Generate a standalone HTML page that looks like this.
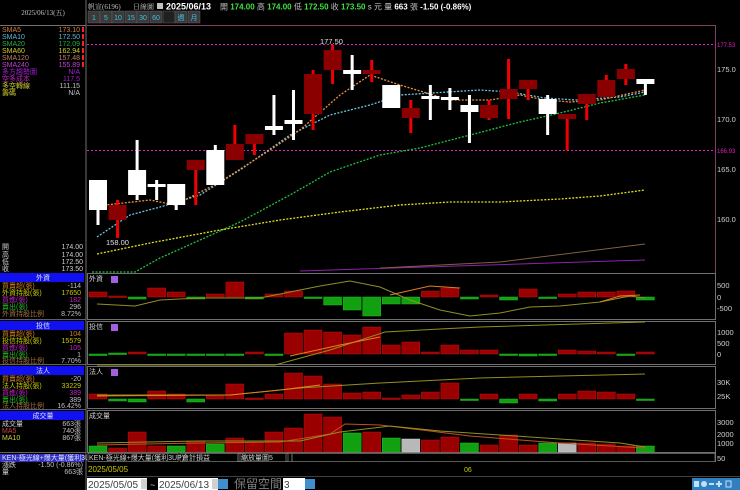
<!DOCTYPE html>
<html><head><meta charset="utf-8">
<style>
html,body{margin:0;padding:0;background:#000;width:740px;height:490px;overflow:hidden}
svg{display:block}
text{font-family:"Liberation Sans","Noto Sans CJK TC",sans-serif}
.s{font-family:"Liberation Serif","Noto Serif CJK SC",serif;font-size:7px}
</style></head><body>
<svg id="c" width="740" height="490" xmlns="http://www.w3.org/2000/svg">
<rect width="740" height="490" fill="#000"/>
<!-- left panel frame -->
<line x1="86" y1="0" x2="86" y2="490" stroke="#707070" stroke-width="1"/>
<line x1="0" y1="25.5" x2="86" y2="25.5" stroke="#707070"/>
<text x="43" y="15" class="s" fill="#c0c0c0" text-anchor="middle">2025/06/13(五)</text>
<g class="s">
<text x="2" y="32" fill="#d08040">SMA5</text><text x="80" y="32" fill="#d08040" text-anchor="end">173.10</text>
<text x="2" y="39" fill="#60b8d8">SMA10</text><text x="80" y="39" fill="#60b8d8" text-anchor="end">172.50</text>
<text x="2" y="46" fill="#20b040">SMA20</text><text x="80" y="46" fill="#20b040" text-anchor="end">172.09</text>
<text x="2" y="53" fill="#d0d030">SMA60</text><text x="80" y="53" fill="#d0d030" text-anchor="end">162.94</text>
<text x="2" y="60" fill="#c08060">SMA120</text><text x="80" y="60" fill="#c08060" text-anchor="end">157.48</text>
<text x="2" y="67" fill="#c040d0">SMA240</text><text x="80" y="67" fill="#c040d0" text-anchor="end">155.89</text>
<text x="2" y="74" fill="#a020d0">多方趨勢圖</text><text x="80" y="74" fill="#a020d0" text-anchor="end">N/A</text>
<text x="2" y="81" fill="#c020c0">空多成本</text><text x="80" y="81" fill="#a020d0" text-anchor="end">117.5</text>
<text x="2" y="88" fill="#d0d030">多空轉線</text><text x="80" y="88" fill="#c0c0c0" text-anchor="end">111.15</text>
<text x="2" y="95" fill="#d0d030">籌碼</text><text x="80" y="95" fill="#c0c0c0" text-anchor="end">N/A</text>
</g>
<g fill="#ff2020"><rect x="82" y="27" width="2" height="5"/><rect x="82" y="34" width="2" height="5"/><rect x="82" y="41" width="2" height="5"/><rect x="82" y="48" width="2" height="5"/><rect x="82" y="55" width="2" height="5"/><rect x="82" y="62" width="2" height="5"/></g>
<!-- OHLC -->
<g class="s" fill="#d0d0d0">
<text x="2" y="249">開</text><text x="83" y="249" text-anchor="end">174.00</text>
<text x="2" y="257">高</text><text x="83" y="257" text-anchor="end">174.00</text>
<text x="2" y="264">低</text><text x="83" y="264" text-anchor="end">172.50</text>
<text x="2" y="271">收</text><text x="83" y="271" text-anchor="end">173.50</text>
</g>
<!-- section headers -->
<g fill="#1010f0"><rect x="0" y="273" width="84" height="9"/><rect x="0" y="321" width="84" height="9"/><rect x="0" y="366" width="84" height="9"/><rect x="0" y="411" width="84" height="9"/><rect x="0" y="454" width="84" height="8" fill="#3030c0"/></g>
<g class="s" text-anchor="middle" fill="#e0e0e0"><text x="43" y="280">外資</text><text x="43" y="328">投信</text><text x="43" y="373">法人</text><text x="43" y="418">成交量</text></g>
<line x1="0" y1="319.5" x2="86" y2="319.5" stroke="#606060"/><line x1="0" y1="364.5" x2="86" y2="364.5" stroke="#606060"/><line x1="0" y1="409.5" x2="86" y2="409.5" stroke="#606060"/><line x1="0" y1="452.5" x2="86" y2="452.5" stroke="#606060"/>
<g class="s">
<text x="2" y="288" fill="#d08020">買賣超(張)</text><text x="81" y="288" fill="#c0c0c0" text-anchor="end">-114</text>
<text x="2" y="295" fill="#c8c800">外資持股(張)</text><text x="81" y="295" fill="#c8c800" text-anchor="end">17650</text>
<text x="2" y="302" fill="#c020c0">買進(張)</text><text x="81" y="302" fill="#c020c0" text-anchor="end">182</text>
<text x="2" y="309" fill="#20c020">賣出(張)</text><text x="81" y="309" fill="#c0c0c0" text-anchor="end">296</text>
<text x="2" y="316" fill="#a07040">外資持股比例</text><text x="81" y="316" fill="#c0c0c0" text-anchor="end">8.72%</text>
<text x="2" y="336" fill="#d08020">買賣超(張)</text><text x="81" y="336" fill="#d08020" text-anchor="end">104</text>
<text x="2" y="343" fill="#c8c800">投信持股(張)</text><text x="81" y="343" fill="#c8c800" text-anchor="end">15579</text>
<text x="2" y="350" fill="#c020c0">買進(張)</text><text x="81" y="350" fill="#c020c0" text-anchor="end">105</text>
<text x="2" y="357" fill="#20c020">賣出(張)</text><text x="81" y="357" fill="#c0c0c0" text-anchor="end">1</text>
<text x="2" y="363" fill="#a07040">投信持股比例</text><text x="81" y="363" fill="#c0c0c0" text-anchor="end">7.70%</text>
<text x="2" y="381" fill="#d08020">買賣超(張)</text><text x="81" y="381" fill="#c0c0c0" text-anchor="end">-20</text>
<text x="2" y="388" fill="#c8c800">法人持股(張)</text><text x="81" y="388" fill="#c8c800" text-anchor="end">33229</text>
<text x="2" y="395" fill="#c020c0">買進(張)</text><text x="81" y="395" fill="#c020c0" text-anchor="end">389</text>
<text x="2" y="402" fill="#20c020">賣出(張)</text><text x="81" y="402" fill="#c0c0c0" text-anchor="end">389</text>
<text x="2" y="408" fill="#a07040">法人持股比例</text><text x="81" y="408" fill="#c0c0c0" text-anchor="end">16.42%</text>
<text x="2" y="426" fill="#d0d0d0">成交量</text><text x="81" y="426" fill="#c0c0c0" text-anchor="end">663張</text>
<text x="2" y="433" fill="#d04040">MA5</text><text x="81" y="433" fill="#c0c0c0" text-anchor="end">740張</text>
<text x="2" y="440" fill="#d0d030">MA10</text><text x="81" y="440" fill="#c0c0c0" text-anchor="end">867張</text>
<text x="2" y="460" fill="#e0e0ff">KEN-極光線+爆大量(獲利3UP)</text>
<text x="2" y="467" fill="#d0d0d0">漲跌</text><text x="83" y="467" fill="#c0c0c0" text-anchor="end">-1.50 (-0.86%)</text>
<text x="2" y="474" fill="#d0d0d0">量</text><text x="83" y="474" fill="#c0c0c0" text-anchor="end">663張</text>
</g>
<!-- top info bar -->
<text x="88" y="9" class="s" fill="#c0c0c0">帆宣(6196)</text>
<text x="133" y="9" class="s" fill="#c0c0c0">日線圖</text>
<rect x="157" y="3" width="6" height="6" fill="#c0c0c0"/>
<text x="166" y="9.5" font-size="9" font-weight="bold" fill="#fff">2025/06/13</text>
<text x="220" y="9.5" font-size="8" fill="#c0c0c0">開 <tspan fill="#40e040" font-weight="bold">174.00</tspan> 高 <tspan fill="#40e040" font-weight="bold">174.00</tspan> 低 <tspan fill="#40e040" font-weight="bold">172.50</tspan> 收 <tspan fill="#40e040" font-weight="bold">173.50</tspan> s 元 量 <tspan fill="#fff" font-weight="bold">663</tspan> 張 <tspan fill="#fff" font-weight="bold">-1.50 (-0.86%)</tspan></text>
<g fill="#3a3a3a" stroke="#606060" stroke-width="0.5">
<rect x="88" y="11" width="12" height="12"/><rect x="100" y="11" width="12" height="12"/><rect x="112" y="11" width="12" height="12"/><rect x="125" y="11" width="12" height="12"/><rect x="137" y="11" width="12" height="12"/><rect x="150" y="11" width="12" height="12"/><rect x="163" y="11" width="12" height="12" fill="#202020"/><rect x="175" y="11" width="12" height="12"/><rect x="188" y="11" width="12" height="12"/></g>
<g font-size="7" fill="#40c0e0" text-anchor="middle"><text x="94" y="20">1</text><text x="106" y="20">5</text><text x="118" y="20">10</text><text x="131" y="20">15</text><text x="143" y="20">30</text><text x="156" y="20">60</text><text x="181" y="20">週</text><text x="194" y="20">月</text></g>
<!-- main chart frame -->
<line x1="715.5" y1="25" x2="715.5" y2="273" stroke="#804060"/>
<line x1="87" y1="25.5" x2="716" y2="25.5" stroke="#804060"/>
<line x1="87" y1="44.5" x2="716" y2="44.5" stroke="#e020c0" stroke-dasharray="2,2"/>
<line x1="87" y1="150.5" x2="716" y2="150.5" stroke="#e020c0" stroke-dasharray="2,2"/>
<g font-size="7.5" fill="#d0d0d0"><text x="717" y="72">175.0</text><text x="717" y="122">170.0</text><text x="717" y="172">165.0</text><text x="717" y="222">160.0</text></g>
<text x="717" y="47" font-size="6" fill="#e020c0">177.53</text>
<text x="717" y="153" font-size="6" fill="#e020c0">166.93</text>
<text x="320" y="44" font-size="7.5" fill="#e0e0e0">177.50</text>
<text x="106" y="245" font-size="7.5" fill="#e0e0e0">158.00</text>
<!-- subpanel frames -->
<g fill="none" stroke="#707070" stroke-width="1">
<rect x="87.5" y="273.5" width="628" height="46"/>
<rect x="87.5" y="321.5" width="628" height="43"/>
<rect x="87.5" y="366.5" width="628" height="42"/>
<rect x="87.5" y="410.5" width="628" height="42"/>
<rect x="87.5" y="453.5" width="628" height="8"/>
</g>
<g class="s" fill="#d0d0d0"><text x="89" y="281">外資</text><text x="89" y="329">投信</text><text x="89" y="374">法人</text><text x="89" y="418">成交量</text></g>
<g fill="#a060e0"><rect x="111" y="276" width="7" height="7"/><rect x="111" y="324" width="7" height="7"/><rect x="111" y="369" width="7" height="7"/></g>
<g font-size="7.5" fill="#d0d0d0">
<text x="717" y="288">500</text><text x="717" y="300">0</text><text x="717" y="311">-500</text>
<text x="717" y="335">1000</text><text x="717" y="346">500</text><text x="717" y="357">0</text>
<text x="717" y="385">30K</text><text x="717" y="399">25K</text>
<text x="717" y="425">3000</text><text x="717" y="437">2000</text><text x="717" y="446">1000</text>
<text x="717" y="461">50</text></g>
<g id="dyn"></g>
<!-- KEN bar -->
<rect x="87" y="453" width="628" height="9" fill="#000"/>
<g fill="none" stroke="#808080" stroke-width="0.7"><rect x="88" y="453.5" width="90" height="8"/><rect x="180" y="453.5" width="60" height="8"/><rect x="238" y="453.5" width="6" height="8"/><rect x="238" y="453.5" width="50" height="8"/><rect x="286" y="453.5" width="6" height="8"/><rect x="292" y="453.5" width="423" height="8"/></g>
<g class="s" fill="#d0d0d0"><text x="89" y="460">KEN-極光線+爆大量(獲利3UP)</text><text x="182" y="460">會計損益</text><text x="241" y="460">縮放量圖5</text></g>
<text x="88" y="472" font-size="8" fill="#c8c800">2025/05/05</text>
<text x="464" y="472" font-size="7" fill="#c8c800">06</text>
<line x1="87" y1="476.5" x2="740" y2="476.5" stroke="#404040"/>
<!-- bottom row -->
<rect x="87" y="478" width="60" height="12" fill="#fff"/><rect x="141" y="479" width="6" height="10" fill="#d0d0d0"/>
<text x="88" y="488" font-size="10" fill="#404040">2025/05/05</text>
<text x="150" y="488" font-size="9" fill="#c0c0c0">~</text>
<rect x="158" y="478" width="60" height="12" fill="#fff"/><rect x="212" y="479" width="6" height="10" fill="#d0d0d0"/>
<text x="159" y="488" font-size="10" fill="#404040">2025/06/13</text>
<rect x="218" y="479" width="10" height="10" fill="#4090d0"/>
<text x="234" y="488" font-size="12" fill="#808080">保留空間</text>
<rect x="283" y="478" width="22" height="12" fill="#fff"/><text x="284" y="488" font-size="10" fill="#404040">3</text>
<rect x="305" y="479" width="10" height="10" fill="#4090d0"/>
<rect x="692" y="478" width="48" height="12" fill="#3080c0"/>
<g fill="#c0e0ff"><rect x="694" y="481" width="5" height="6"/><circle cx="704" cy="484" r="3"/><rect x="709" y="483" width="5" height="2"/><rect x="716" y="483" width="6" height="2"/><rect x="718" y="481" width="2" height="6"/><rect x="726" y="481" width="5" height="6" fill="none" stroke="#c0e0ff"/></g>
</svg>
<script>
var NS="http://www.w3.org/2000/svg",g=document.getElementById("dyn");
function el(t,a){var e=document.createElementNS(NS,t);for(var k in a)e.setAttribute(k,a[k]);g.appendChild(e);return e;}
function X(i){return 89+i*19.55;}
function pl(pts,col,dash,w){el("polyline",{points:pts.map(function(p){return p.join(",")}).join(" "),fill:"none",stroke:col,"stroke-width":w||1.3,"stroke-dasharray":dash||""});}
// MAs
pl([[300,271],[645,260]],"#9020b0","",1);
pl([[380,268],[500,262],[645,244]],"#806040","",1);
pl([[92,272],[135,272],[160,258],[200,240],[240,222],[290,195],[330,172],[380,155],[420,148],[470,135],[520,122],[560,113],[600,103],[645,95]],"#20c040","2,1.5");
pl([[97,254],[150,243],[220,230],[280,220],[340,212],[400,205],[450,202],[500,202],[560,199],[600,196],[645,190]],"#e0e020","2,1.5");
pl([[97,237],[130,215],[160,207],[200,195],[240,170],[290,135],[330,115],[370,105],[400,95],[480,90],[510,92],[545,98],[575,100],[620,97],[645,92]],"#70c0e0","2,1.5");
pl([[97,206],[150,200],[175,205],[220,182],[270,150],[300,130],[340,95],[370,75],[400,85],[450,100],[490,100],[520,95],[545,100],[570,102],[600,100],[645,90]],"#f09040","2,1.5");
// candles [top,bot,wt,wb,color]
var C=[[180,210,180,225,"W"],[205,220,200,238,"R"],[170,195,140,200,"W"],[184,186,180,200,"W"],[184,205,184,210,"W"],[160,170,160,205,"R"],[150,185,145,185,"W"],[144,160,125,160,"R"],[134,144,134,155,"R"],[126,130,95,135,"W"],[120,124,90,140,"W"],[74,114,70,130,"R"],[50,70,45,84,"R"],[70,74,55,90,"W"],[70,74,60,82,"R"],[85,108,85,108,"W"],[108,118,100,133,"R"],[96,98,85,120,"W"],[97,99,88,110,"W"],[105,112,95,143,"W"],[105,118,100,120,"R"],[89,99,59,119,"R"],[80,89,80,100,"R"],[99,114,95,135,"W"],[114,119,114,150,"R"],[94,104,94,120,"R"],[80,97,75,97,"R"],[69,79,64,85,"R"],[79,84,79,95,"W"]];
C.forEach(function(c,i){var x=X(i),w=c[4]=="W";el("rect",{x:x+7.5,y:c[2],width:3,height:c[3]-c[2],fill:w?"#fff":"#f00000"});el("rect",{x:x,y:c[0],width:18,height:Math.max(c[1]-c[0],3),fill:w?"#fff":"#8a0000"});});
// sub panels: value = top y; base
function bars(base,arr,lineA,lineB){arr.forEach(function(v,i){var x=X(i),t=v[0],col=v[1];var y=Math.min(t,base),h=Math.max(Math.abs(t-base),1.5);el("rect",{x:x,y:y,width:18,height:h,fill:col=="R"?"#9a0000":col=="G"?"#10a010":"#b8b8b8",stroke:col=="R"?"#c01010":col=="G"?"#20c020":"#d0d0d0","stroke-width":0.5});});}
bars(297,[[292,"R"],[296,"R"],[299,"G"],[288,"R"],[292,"R"],[299,"G"],[294,"R"],[282,"R"],[299,"G"],[294,"R"],[291,"R"],[298,"G"],[305,"G"],[310,"G"],[316,"G"],[304,"G"],[304,"G"],[291,"R"],[288,"R"],[299,"G"],[295,"R"],[300,"G"],[289,"R"],[298,"G"],[294,"R"],[292,"R"],[292,"R"],[291,"R"],[300,"G"]]);
pl([[97,304],[135,306],[160,300],[200,298],[260,298],[285,293],[320,286],[350,281],[380,287],[410,300],[440,310],[470,316],[500,313],[530,307],[560,306],[600,302],[630,296],[645,298]],"#909020","",1);
pl([[390,295],[430,286],[460,288]],"#e08020","",1);pl([[600,302],[620,296],[640,295]],"#e08020","",1);
bars(354,[[354,"G"],[353,"G"],[352,"R"],[354,"G"],[354,"G"],[354,"G"],[354,"G"],[354,"G"],[352,"R"],[354,"G"],[333,"R"],[330,"R"],[332,"R"],[335,"R"],[327,"R"],[345,"R"],[342,"R"],[352,"R"],[345,"R"],[350,"R"],[350,"R"],[354,"G"],[356,"G"],[354,"G"],[350,"R"],[351,"R"],[352,"R"],[355,"G"],[352,"R"]]);
pl([[97,365],[275,365],[330,350],[385,332],[440,329],[480,327],[645,322]],"#909020","",1);
pl([[290,356],[340,345],[380,337]],"#e08020","",1);
bars(399,[[394,"R"],[401,"G"],[402,"G"],[391,"R"],[394,"R"],[402,"G"],[396,"R"],[384,"R"],[398,"R"],[394,"R"],[373,"R"],[376,"R"],[384,"R"],[393,"R"],[392,"R"],[398,"R"],[395,"R"],[392,"R"],[383,"R"],[400,"G"],[394,"R"],[403,"G"],[394,"R"],[401,"G"],[394,"R"],[391,"R"],[392,"R"],[394,"R"],[400,"G"]]);
pl([[97,395],[230,395],[300,388],[380,383],[480,378],[560,376],[645,374]],"#909020","",1);
pl([[97,396],[230,395],[280,390],[320,385]],"#e08020","",1);
bars(452,[[446,"G"],[448,"R"],[432,"R"],[446,"R"],[446,"G"],[441,"R"],[444,"G"],[438,"R"],[442,"R"],[432,"R"],[428,"R"],[414,"R"],[417,"R"],[433,"G"],[432,"R"],[438,"G"],[439,"N"],[440,"R"],[437,"R"],[443,"G"],[445,"R"],[435,"R"],[445,"R"],[443,"G"],[443,"N"],[443,"R"],[444,"R"],[446,"R"],[446,"G"]]);
pl([[97,445],[200,443],[280,442],[330,434],[345,424],[380,425],[430,431],[470,436],[520,440],[560,443],[610,446],[645,448]],"#c05020","",1);
pl([[97,443],[200,441],[300,441],[340,432],[390,426],[440,431],[500,435],[560,439],[620,443],[645,447]],"#909020","",1);
</script>
</body></html>
